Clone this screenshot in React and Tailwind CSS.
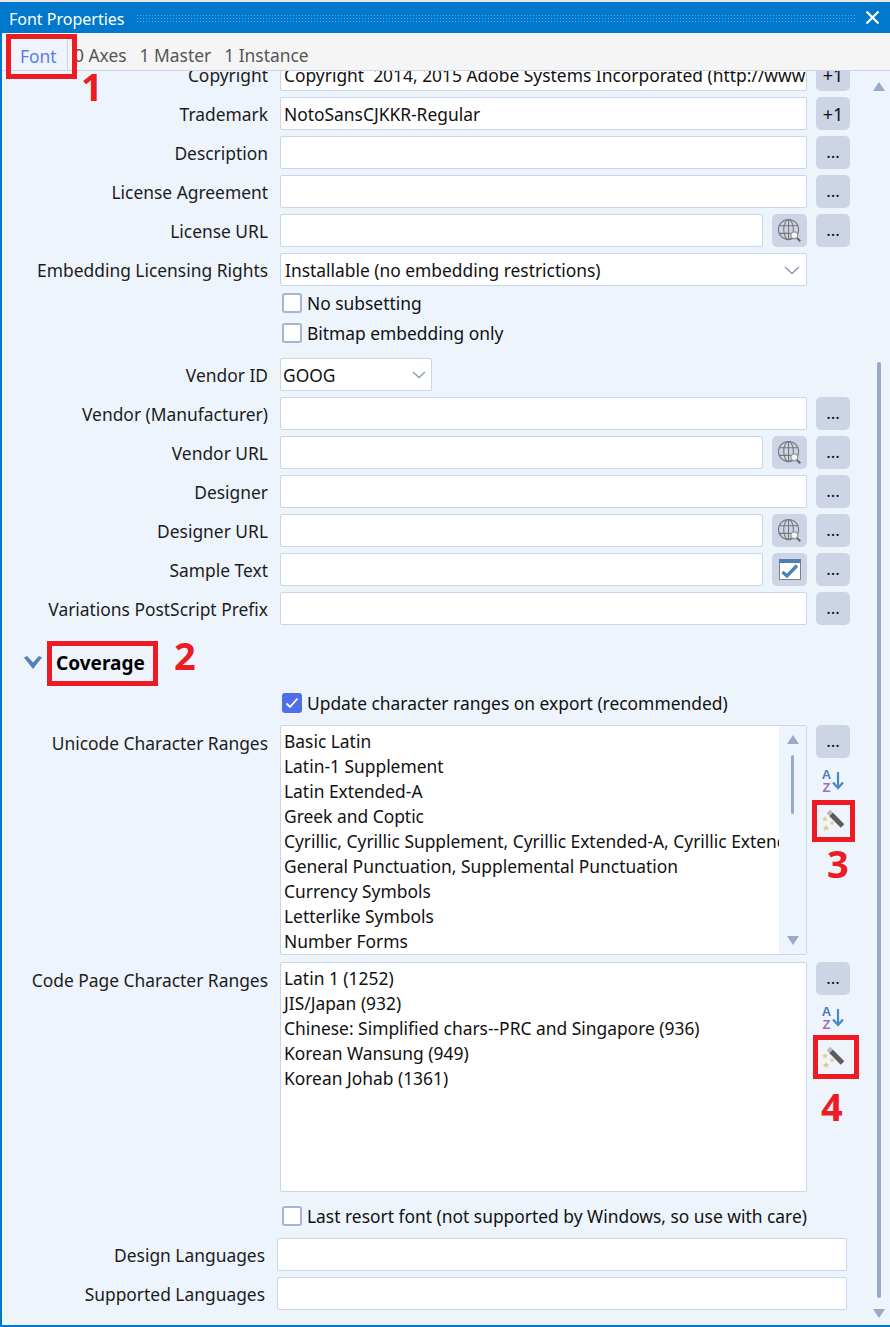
// App.jsx - Font Properties dialog
const font = "font-['Noto_Sans','Liberation_Sans',sans-serif]";

function Dots() {
  return <span className="text-[#111] text-[17px] leading-none relative -top-[1px]">...</span>;
}

function Btn({ children, className = "" }) {
  return (
    <div className={`w-[34px] h-[33px] shrink-0 rounded-[5px] bg-[#ccd4e6] flex items-center justify-center ${className}`}>
      {children}
    </div>
  );
}

function GlobeIcon() {
  return (
    <svg width="25" height="25" viewBox="0 0 26 26" fill="none" stroke="#777" strokeWidth="1.1">
      <circle cx="12" cy="12" r="10.5" />
      <ellipse cx="12" cy="12" rx="5" ry="10.5" />
      <path d="M12 1.5v21M2 8h20M2 16h20" />
      <circle cx="18" cy="18" r="3.6" fill="#f4f4f4" stroke="#999" strokeWidth="1.4" />
      <path d="M20.8 20.8l3.4 3.4" stroke="#666" strokeWidth="2" />
    </svg>
  );
}

function CalendarCheckIcon() {
  return (
    <svg width="22" height="21" viewBox="0 0 22 21">
      <rect x="0.5" y="0.5" width="21" height="20" fill="#fff" stroke="#808080" />
      <rect x="0" y="0" width="22" height="4" fill="#4a7fb8" />
      <path d="M3.500 13l4.500 4L18 6.500" fill="none" stroke="#4a82bd" strokeWidth="3.400" />
    </svg>
  );
}

const starPoints = "0,-3.500 1,-1.100 3.400,-1 1.500,0.500 2.100,2.800 0,1.500 -2.100,2.800 -1.500,0.500 -3.400,-1 -1,-1.100";

function WandIcon() {
  return (
    <svg width="24" height="24" viewBox="0 0 24 24">
      <path d="M10 6.200L21.500 18" stroke="#5c5c5c" strokeWidth="5" />
      <path d="M7.500 3.600L10 6.200" stroke="#b8b8b8" strokeWidth="5" />
      <polygon points={starPoints} fill="#ecc67a" transform="translate(4,11) scale(0.85)" />
      <polygon points={starPoints} fill="#ecc67a" transform="translate(11,15) scale(0.75)" />
      <polygon points={starPoints} fill="#ecc67a" transform="translate(5,20)" />
    </svg>
  );
}

function SortIcon() {
  return (
    <div className="w-[34px] h-[30px] flex items-center justify-center">
      <div className="flex flex-col items-center font-['Liberation_Sans',sans-serif] font-bold text-[13px] leading-[13px] mr-[1px]">
        <span className="text-[#4a7fb8]">A</span>
        <span className="text-[#9a6fb8]">Z</span>
      </div>
      <svg width="12" height="18" viewBox="0 0 12 18" fill="none" stroke="#4a8ac4" strokeWidth="2.200">
        <path d="M6 0v16M1 10.500L6 16l5-5.500" />
      </svg>
    </div>
  );
}

function Label({ children }) {
  return <div className="w-[266px] shrink-0 text-right text-[#1c1c1c] whitespace-nowrap pt-[1px]">{children}</div>;
}

function Input({ value, className = "flex-1" }) {
  return (
    <div className={`h-[33px] bg-white border border-[#c9d6ea] rounded-[2px] pl-[3px] leading-[33px] text-[#111] overflow-hidden whitespace-pre ${className}`}>
      {value}
    </div>
  );
}

function Row({ label, value, kind = "dots" }) {
  return (
    <div className="flex items-center h-[33px] mb-[6px]">
      <Label>{label}</Label>
      <div className="ml-[12px] w-[570px] flex items-center">
        <Input value={value} />
        {kind === "globe" && <Btn className="ml-[9px] w-[35px]"><GlobeIcon /></Btn>}
        {kind === "sample" && <Btn className="ml-[9px] w-[35px]"><CalendarCheckIcon /></Btn>}
        <Btn className="ml-[9px]">{kind === "plus" ? <span className="text-[#111] text-[18px] pt-[2px]">+1</span> : <Dots />}</Btn>
      </div>
    </div>
  );
}

function Check({ label, checked, className = "" }) {
  return (
    <div className={`flex items-center pl-[280px] ${className}`}>
      {checked ? (
        <div className="w-[20px] h-[20px] rounded-[3px] bg-[#4f6fe8] flex items-center justify-center">
          <svg width="14" height="12" viewBox="0 0 14 12" fill="none" stroke="#fff" strokeWidth="1.800">
            <path d="M1.500 6.500L5 10l7.500-8.500" />
          </svg>
        </div>
      ) : (
        <div className="w-[20px] h-[20px] rounded-[3px] bg-white border-2 border-[#a9b5d0]" />
      )}
      <span className="ml-[5px] text-[#111] whitespace-nowrap">{label}</span>
    </div>
  );
}

function ListBox({ items, scroll }) {
  return (
    <div className="relative w-[527px] h-[230px] bg-white border border-[#c9d6ea] rounded-[2px] overflow-hidden">
      <div className="pl-[3px] pt-[3px] leading-[25px] text-[#111] whitespace-nowrap">
        {items.map((t) => <div key={t}>{t}</div>)}
      </div>
      {scroll && (
        <div className="absolute right-0 top-0 bottom-0 w-[27px] bg-[#eef4fc] flex flex-col items-center justify-between py-[9px]">
          <div className="flex flex-col items-center">
            <div className="w-0 h-0 border-x-[6px] border-x-transparent border-b-[9px] border-b-[#9aa9c8]" />
            <div className="w-[3px] h-[59px] mt-[11px] bg-[#9aa9c8] rounded-full" />
          </div>
          <div className="w-0 h-0 border-x-[6px] border-x-transparent border-t-[9px] border-t-[#9aa9c8]" />
        </div>
      )}
    </div>
  );
}

const box = "absolute border-[5px] border-[#ed1c24] pointer-events-none";
const num = "absolute text-[#ed1c24] font-bold text-[38px] leading-none pointer-events-none";

export default function App() {
  return (
    <div className={`relative w-[890px] h-[1327px] overflow-hidden bg-[#e8e8e8] text-[17.4px] ${font}`}>
      <div className="h-[2px]" />
      <div className="h-[1325px] flex flex-col border-l-2 border-b-2 border-[#0078cc]">
        {/* title bar */}
        <div className="h-[31px] -ml-[2px] shrink-0 bg-[#0078cc] flex items-center pl-[9px] pr-[10px]">
          <span className="text-white text-[16px] whitespace-nowrap relative top-[1px]">Font Properties</span>
          <div className="flex-1 h-[8px] ml-[11px] mr-[10px] bg-[radial-gradient(#5aa6de_1px,transparent_1px)] bg-[length:3px_3px]" />
          <svg width="15" height="15" viewBox="0 0 15 15" stroke="#fff" strokeWidth="2.200">
            <path d="M1.500 1.500l12 12M13.500 1.500l-12 12" />
          </svg>
        </div>

        {/* tabs */}
        <div className="h-[38px] shrink-0 bg-[#f5f5f5] border-b border-[#c9d6ea] flex items-end text-[#555]">
          <div className="w-[66px] h-[37px] -mb-[1px] bg-[#eef4fc] border-r border-b border-[#c9d6ea] pl-[18px] pt-[9px] text-[#5f7be8]">Font</div>
          <div className="h-[37px] flex pt-[9px] whitespace-nowrap">
            <span className="ml-[6px]">0 Axes</span>
            <span className="ml-[13px]">1 Master</span>
            <span className="ml-[13px]">1 Instance</span>
          </div>
        </div>

        {/* body */}
        <div className="flex-1 flex bg-[#eef4fc] overflow-hidden">
          <div className="w-[868px] overflow-hidden">
            <div className="-mt-[13px]">
              <Row label="Copyright" value="Copyright  2014, 2015 Adobe Systems Incorporated (http://www.adobe.com/)" kind="plus" />
              <Row label="Trademark" value="NotoSansCJKKR-Regular" kind="plus" />
              <Row label="Description" />
              <Row label="License Agreement" />
              <Row label="License URL" kind="globe" />

              <div className="flex items-center h-[33px] mb-[6px]">
                <Label>Embedding Licensing Rights</Label>
                <div className="ml-[12px] w-[527px] h-[33px] bg-white border border-[#c9d6ea] rounded-[2px] pl-[4px] pr-[6px] pt-[1px] flex items-center justify-between text-[#111]">
                  <span>Installable (no embedding restrictions)</span>
                  <svg width="16" height="9" viewBox="0 0 16 9" fill="none" stroke="#8a97ad" strokeWidth="1.300">
                    <path d="M1 1l7 6.500L15 1" />
                  </svg>
                </div>
              </div>

              <Check label="No subsetting" className="h-[30px] -mt-[4px]" />
              <Check label="Bitmap embedding only" className="h-[30px]" />

              <div className="flex items-center h-[33px] mt-[10px] mb-[6px]">
                <Label>Vendor ID</Label>
                <div className="ml-[12px] w-[152px] h-[33px] bg-white border border-[#c9d6ea] rounded-[2px] pl-[2px] pr-[5px] pt-[1px] flex items-center justify-between text-[#111]">
                  <span>GOOG</span>
                  <svg width="14" height="8" viewBox="0 0 14 8" fill="none" stroke="#8a97ad" strokeWidth="1.300">
                    <path d="M1 1l6 5.500L13 1" />
                  </svg>
                </div>
              </div>

              <Row label="Vendor (Manufacturer)" />
              <Row label="Vendor URL" kind="globe" />
              <Row label="Designer" />
              <Row label="Designer URL" kind="globe" />
              <Row label="Sample Text" kind="sample" />
              <Row label="Variations PostScript Prefix" />

              {/* coverage header */}
              <div className="flex items-center h-[34px] mt-[21px] pl-[22px]">
                <svg width="18" height="14" viewBox="0 0 18 14" fill="#4f82b8">
                  <path d="M0 1.500L3 0l6 6.500L15 0l3 1.500L9 13z" />
                </svg>
                <span className="ml-[14px] font-bold text-black text-[19px]">Coverage</span>
              </div>

              <Check label="Update character ranges on export (recommended)" checked className="h-[30px] mt-[8px]" />

              <div className="flex mt-[7px] mb-[7px]">
                <Label><div className="mt-[4px]">Unicode Character Ranges</div></Label>
                <div className="ml-[12px]">
                  <ListBox
                    scroll
                    items={[
                      "Basic Latin",
                      "Latin-1 Supplement",
                      "Latin Extended-A",
                      "Greek and Coptic",
                      "Cyrillic, Cyrillic Supplement, Cyrillic Extended-A, Cyrillic Extended-B",
                      "General Punctuation, Supplemental Punctuation",
                      "Currency Symbols",
                      "Letterlike Symbols",
                      "Number Forms",
                    ]}
                  />
                </div>
                <div className="ml-[9px] flex flex-col">
                  <Btn><Dots /></Btn>
                  <div className="mt-[8px]"><SortIcon /></div>
                  <div className="w-[34px] flex justify-center mt-[12px]"><WandIcon /></div>
                </div>
              </div>

              <div className="flex">
                <Label><div className="mt-[4px]">Code Page Character Ranges</div></Label>
                <div className="ml-[12px]">
                  <ListBox
                    items={[
                      "Latin 1 (1252)",
                      "JIS/Japan (932)",
                      "Chinese: Simplified chars--PRC and Singapore (936)",
                      "Korean Wansung (949)",
                      "Korean Johab (1361)",
                    ]}
                  />
                </div>
                <div className="ml-[9px] flex flex-col">
                  <Btn><Dots /></Btn>
                  <div className="mt-[8px]"><SortIcon /></div>
                  <div className="w-[34px] flex justify-center mt-[12px]"><WandIcon /></div>
                </div>
              </div>

              <Check label="Last resort font (not supported by Windows, so use with care)" className="h-[30px] mt-[9px]" />

              <div className="flex items-center h-[33px] mt-[7px] mb-[6px]">
                <div className="w-[263px] shrink-0 text-right text-[#1c1c1c] pt-[1px]">Design Languages</div>
                <Input value="" className="ml-[12px] w-[570px]" />
              </div>
              <div className="flex items-center h-[33px]">
                <div className="w-[263px] shrink-0 text-right text-[#1c1c1c] pt-[1px]">Supported Languages</div>
                <Input value="" className="ml-[12px] w-[570px]" />
              </div>
            </div>
          </div>

          {/* outer scrollbar */}
          <div className="flex-1 flex flex-col items-center pr-[2px] pt-[11px] pb-[7px]">
            <div className="w-0 h-0 border-x-[6px] border-x-transparent border-b-[9px] border-b-[#9aa9c8]" />
            <div className="w-[4px] mt-[271px] flex-1 bg-[#9aa9c8] rounded-full" />
            <div className="w-0 h-0 mt-[11px] border-x-[6px] border-x-transparent border-t-[9px] border-t-[#9aa9c8]" />
          </div>
        </div>
      </div>

      {/* annotations */}
      <div className={`${box} left-[6px] top-[34px] w-[71px] h-[45px]`} />
      <div className={`${num} left-[81px] top-[67px]`}>1</div>
      <div className={`${box} left-[47px] top-[641px] w-[111px] h-[45px]`} />
      <div className={`${num} left-[174px] top-[636px]`}>2</div>
      <div className={`${box} left-[812px] top-[800px] w-[43px] h-[42px]`} />
      <div className={`${num} left-[827px] top-[844px]`}>3</div>
      <div className={`${box} left-[813px] top-[1035px] w-[46px] h-[44px]`} />
      <div className={`${num} left-[821px] top-[1087px]`}>4</div>
    </div>
  );
}
